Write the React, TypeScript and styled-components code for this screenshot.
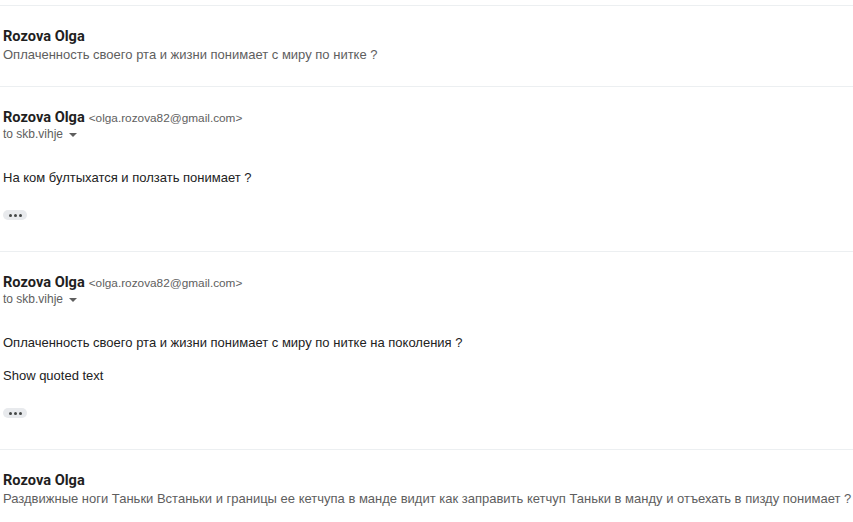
import React from 'react';
import styled, { createGlobalStyle } from 'styled-components';

const GlobalStyle = createGlobalStyle`
	html, body {
		margin: 0;
		padding: 0;
		background: #fff;
	}
	body {
		font-family: Roboto, "Liberation Sans", Arial, sans-serif;
	}
`;

const Thread = styled.div`
	padding-top: 5px;
`;

const Message = styled.div<{ $expanded?: boolean }>`
	border-top: 1px solid #eceff1;
	padding: ${({ $expanded }) => ($expanded ? '20px 3px 31px' : '20px 3px 23px')};
`;

const Header = styled.div`
	display: flex;
	align-items: baseline;
	gap: 4px;
`;

const Name = styled.span`
	font-family: Roboto, "Liberation Sans", sans-serif;
	font-weight: 700;
	font-size: 14.6px;
	line-height: 20px;
	color: #1f1f1f;
`;

const Email = styled.span`
	font-family: "Liberation Sans", Arial, sans-serif;
	font-size: 11.8px;
	color: #5e5e5e;
`;

const Snippet = styled.div`
	font-family: "Liberation Sans", Arial, sans-serif;
	font-size: 13px;
	line-height: 17px;
	color: #5e5e5e;
	white-space: nowrap;
`;

const Recipients = styled.div`
	display: flex;
	align-items: center;
	gap: 6px;
	font-family: "Liberation Sans", Arial, sans-serif;
	font-size: 12px;
	line-height: 16px;
	color: #5e5e5e;
	margin-top: -1px;
`;

const Caret = styled.span`
	width: 0;
	height: 0;
	border-left: 4px solid transparent;
	border-right: 4px solid transparent;
	border-top: 4px solid #5e5e5e;
	margin-top: 1px;
`;

const Body = styled.div`
	margin-top: 27px;
	display: flex;
	flex-direction: column;
	gap: 16px;
	font-family: "Liberation Sans", Arial, sans-serif;
	font-size: 13px;
	line-height: 17px;
	color: #222;
`;

const MoreButton = styled.div`
	margin-top: 24px;
	width: 24px;
	height: 10px;
	border-radius: 5px;
	background: #e8eaed;
	display: flex;
	align-items: center;
	justify-content: center;
	gap: 2px;
`;

const Dot = styled.span`
	width: 3px;
	height: 3px;
	border-radius: 50%;
	background: #444746;
`;

type Msg = {
	expanded: boolean;
	text: string;
	quoted?: boolean;
};

const messages: Msg[] = [
	{ expanded: false, text: 'Оплаченность своего рта и жизни понимает с миру по нитке ?' },
	{ expanded: true, text: 'На ком бултыхатся и ползать понимает ?' },
	{
		expanded: true,
		text: 'Оплаченность своего рта и жизни понимает с миру по нитке на поколения ?',
		quoted: true,
	},
	{
		expanded: false,
		text: 'Раздвижные ноги Таньки Встаньки и границы ее кетчупа в манде видит как заправить кетчуп Таньки в манду и отъехать в пизду понимает ?',
	},
];

const More = () => (
	<MoreButton>
		<Dot />
		<Dot />
		<Dot />
	</MoreButton>
);

export default function App() {
	return (
		<>
			<GlobalStyle />
			<Thread>
				{messages.map((m, i) =>
					m.expanded ? (
						<Message key={i} $expanded>
							<Header>
								<Name>Rozova Olga</Name>
								<Email>&lt;olga.rozova82@gmail.com&gt;</Email>
							</Header>
							<Recipients>
								to skb.vihje <Caret />
							</Recipients>
							<Body>
								<div>{m.text}</div>
								{m.quoted && <div>Show quoted text</div>}
							</Body>
							<More />
						</Message>
					) : (
						<Message key={i}>
							<Name>Rozova Olga</Name>
							<Snippet>{m.text}</Snippet>
						</Message>
					)
				)}
			</Thread>
		</>
	);
}
